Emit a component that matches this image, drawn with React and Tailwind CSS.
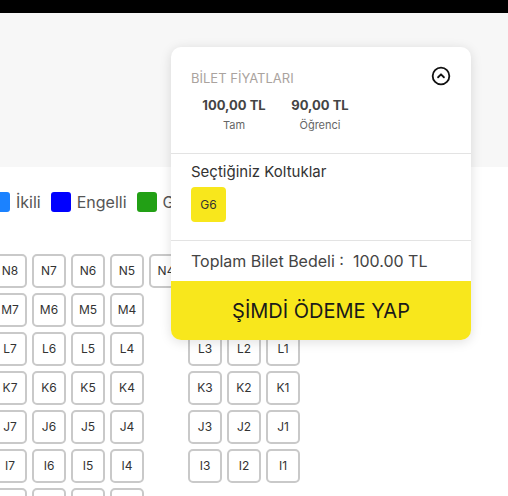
const leftRows = [
  { row: "N", seats: ["N8", "N7", "N6", "N5", "N4", "N3", "N2", "N1"], aisle: false },
  { row: "M", seats: ["M7", "M6", "M5", "M4"], right: ["M3", "M2", "M1"] },
  { row: "L", seats: ["L7", "L6", "L5", "L4"], right: ["L3", "L2", "L1"] },
  { row: "K", seats: ["K7", "K6", "K5", "K4"], right: ["K3", "K2", "K1"] },
  { row: "J", seats: ["J7", "J6", "J5", "J4"], right: ["J3", "J2", "J1"] },
  { row: "I", seats: ["I7", "I6", "I5", "I4"], right: ["I3", "I2", "I1"] },
  { row: "H", seats: ["H7", "H6", "H5", "H4"], right: [] },
];

const legend = [
  { label: "İkili", color: "bg-[#1b82ff]" },
  { label: "Engelli", color: "bg-[#0000ff]" },
  { label: "Gazi", color: "bg-[#22a015]" },
];

function Seat({ name }) {
  return (
    <div className="w-[34px] h-[34px] shrink-0 flex items-center justify-center rounded-[5px] border-2 border-[#c9c9c9] bg-white text-[12px] text-[#333]">
      {name}
    </div>
  );
}

function ChevronCircle() {
  return (
    <svg width="20" height="20" viewBox="0 0 24 24" fill="none" stroke="#111" strokeWidth="2.2" strokeLinecap="round" strokeLinejoin="round">
      <circle cx="12" cy="12" r="10" />
      <path d="m8.5 13.5 3.5-3.5 3.5 3.5" />
    </svg>
  );
}

function PricePanel() {
  return (
    <div className="absolute left-[171px] top-[47px] w-[300px] bg-white rounded-[10px] overflow-hidden shadow-[0_2px_12px_rgba(0,0,0,0.13)]">
      {/* prices */}
      <div className="h-[106px] pt-[23px] pl-[20px] pr-[20px]">
        <div className="flex justify-between items-start">
          <span className="text-[13px] leading-[16px] text-[#aaa39e]">BİLET FİYATLARI</span>
          <span className="-mt-[4px]">
            <ChevronCircle />
          </span>
        </div>
        <div className="flex mt-[11px]">
          <div className="w-[86px] text-center">
            <div className="text-[13px] leading-[16px] font-bold text-[#444]">100,00 TL</div>
            <div className="mt-[5px] text-[11px] leading-[14px] text-[#666]">Tam</div>
          </div>
          <div className="w-[86px] text-center">
            <div className="text-[13px] leading-[16px] font-bold text-[#444]">90,00 TL</div>
            <div className="mt-[5px] text-[11px] leading-[14px] text-[#666]">Öğrenci</div>
          </div>
        </div>
      </div>
      <div className="h-px bg-[#e3e3e3]" />

      {/* selected seats */}
      <div className="h-[86px] pt-[8px] pl-[20px]">
        <div className="text-[15px] leading-[20px] text-[#333]">Seçtiğiniz Koltuklar</div>
        <div className="mt-[5px] w-[35px] h-[35px] rounded-[4px] bg-[#f8e71c] flex items-center justify-center text-[12px] text-[#333]">
          G6
        </div>
      </div>
      <div className="h-px bg-[#e3e3e3]" />

      {/* total */}
      <div className="h-[40px] pl-[20px] flex items-center text-[16px] text-[#444] whitespace-pre">
        Toplam Bilet Bedeli :  100.00 TL
      </div>

      <button className="w-full h-[59px] bg-[#f8e71c] flex items-center justify-center text-[20px] text-[#1a1a1a]">
        ŞİMDİ ÖDEME YAP
      </button>
    </div>
  );
}

export default function App() {
  return (
    <div className="relative w-[508px] h-[496px] overflow-hidden bg-white font-['Inter',sans-serif]">
      <div className="h-[13px] bg-black" />
      <div className="h-[154px] bg-[#f7f7f7]" />

      {/* legend */}
      <div className="flex items-center gap-[10px] ml-[-10px] mt-[25px]">
        {legend.map((l) => (
          <div key={l.label} className="flex items-center gap-[6px]">
            <span className={`w-[20px] h-[20px] rounded-[3px] ${l.color}`} />
            <span className="text-[16px] leading-[20px] text-[#555]">{l.label}</span>
          </div>
        ))}
      </div>

      {/* seat map */}
      <div className="mt-[42px] ml-[-7px] flex flex-col gap-[5px]">
        {leftRows.map((r) => (
          <div key={r.row} className="flex gap-[5px]">
            {r.seats.map((s) => (
              <Seat key={s} name={s} />
            ))}
            {r.right && (
              <>
                <div className="w-[34px] shrink-0" />
                {r.right.map((s) => (
                  <Seat key={s} name={s} />
                ))}
              </>
            )}
          </div>
        ))}
      </div>

      <PricePanel />
    </div>
  );
}
